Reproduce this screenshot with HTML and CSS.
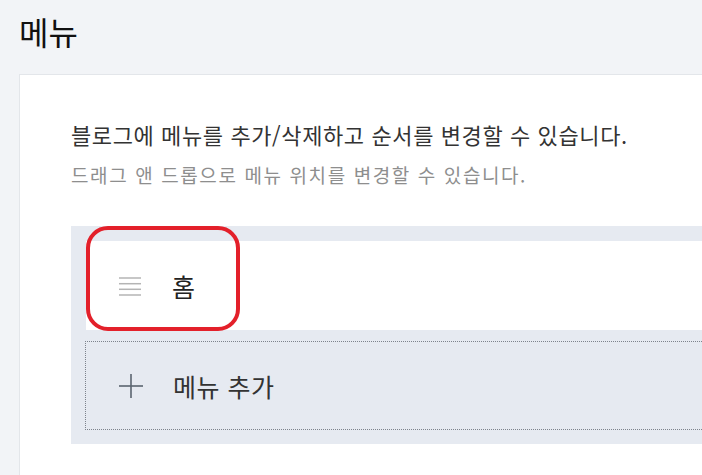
FILE: index.html
```html
<!DOCTYPE html>
<html lang="ko">
<head>
<meta charset="utf-8">
<link rel="stylesheet" href="styles.css">
</head>
<body>
<h1 class="title">메뉴</h1>
<section class="card">
  <p class="desc">블로그에 메뉴를 추가/삭제하고 순서를 변경할 수 있습니다.</p>
  <p class="hint">드래그 앤 드롭으로 메뉴 위치를 변경할 수 있습니다.</p>
  <div class="panel">
    <div class="row">
      <span class="drag">
        <svg width="22" height="20" viewBox="0 0 22 20"><g stroke="#b4b4b4" stroke-width="1.5"><line x1="0" y1="2" x2="22" y2="2"/><line x1="0" y1="7.7" x2="22" y2="7.7"/><line x1="0" y1="13.3" x2="22" y2="13.3"/><line x1="0" y1="19" x2="22" y2="19"/></g></svg>
      </span>
      <span class="label">홈</span>
    </div>
    <div class="add">
      <span class="plus">
        <svg width="24" height="24" viewBox="0 0 24 24"><g stroke="#5b6470" stroke-width="1.6"><line x1="0" y1="12" x2="24" y2="12"/><line x1="12" y1="0" x2="12" y2="24"/></g></svg>
      </span>
      <span class="label">메뉴 추가</span>
    </div>
    <div class="mark"></div>
  </div>
</section>
</body>
</html>
```

FILE: styles.css
```css
html, body {
  margin: 0;
  padding: 0;
  background: #f2f4f7;
  overflow: hidden;
  height: 100%;
}
body {
  font-family: "Noto Sans CJK KR", "Noto Sans", sans-serif;
  color: #222;
}
.title {
  margin: 0;
  padding: 9px 0 0 19px;
  height: 64px;
  box-sizing: border-box;
  font-size: 32px;
  font-weight: 400;
  line-height: 44px;
  color: #111;
}
.card {
  margin-left: 19px;
  margin-top: 10px;
  background: #fff;
  border: 1px solid #e3e6ea;
  border-right: none;
  border-bottom: none;
  padding: 39px 0 31px 51px;
}
.desc {
  margin: 0;
  font-size: 22px;
  letter-spacing: 0.6px;
  line-height: 40px;
  color: #333;
}
.hint {
  margin: 6px 0 0;
  font-size: 19px;
  letter-spacing: 1.6px;
  line-height: 30px;
  color: #8e8e8e;
}
.panel {
  position: relative;
  margin-top: 36px;
  background: #e6eaf1;
  padding: 15px 0 14px 15px;
  display: flex;
  flex-direction: column;
  gap: 11px;
}
.row {
  height: 89px;
  background: #fff;
  display: flex;
  align-items: center;
}
.add {
  height: 89px;
  box-sizing: border-box;
  border: 1px dotted #7d838c;
  border-right: none;
  margin-left: -1px;
  display: flex;
  align-items: center;
}
.drag {
  width: 86px;
  padding-left: 33px;
  box-sizing: border-box;
  display: flex;
}
.plus {
  width: 87px;
  padding-left: 33px;
  box-sizing: border-box;
  display: flex;
}
.label {
  font-size: 25px;
  letter-spacing: 0.5px;
  color: #222;
}
.add .label {
  color: #333;
}
.mark {
  position: absolute;
  left: 15px;
  top: 0;
  width: 154px;
  height: 105px;
  box-sizing: border-box;
  border: 4px solid #e3202a;
  border-radius: 22px;
}
```
